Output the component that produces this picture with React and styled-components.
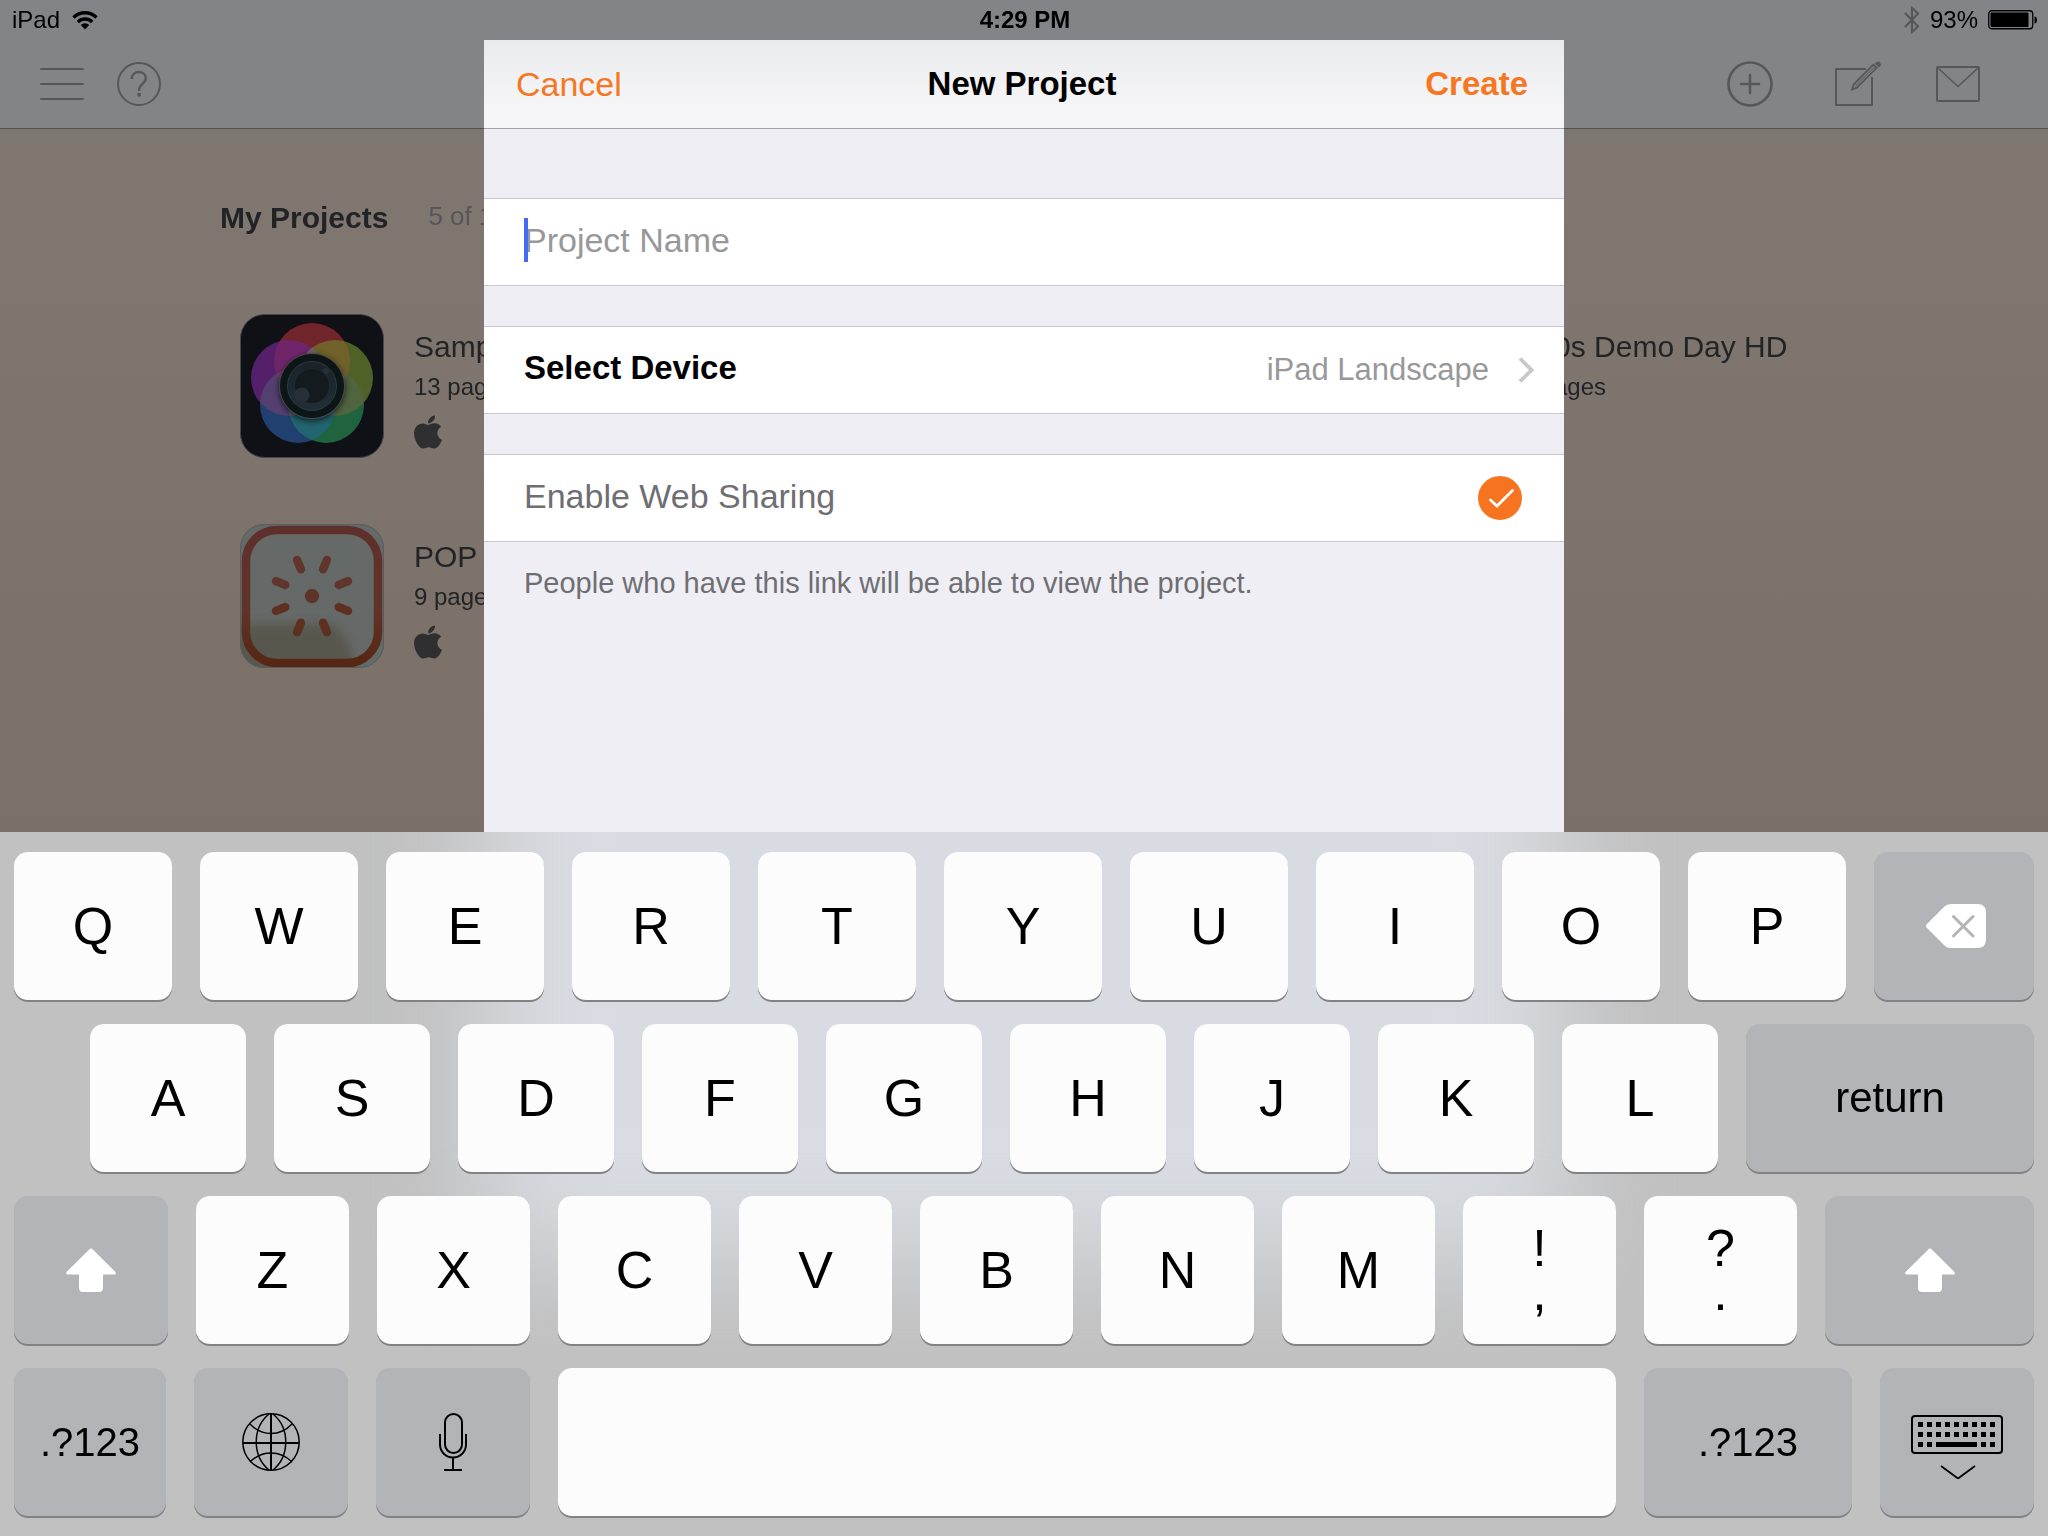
import React, { useState } from "react";
import styled, { createGlobalStyle } from "styled-components";
import { FaApple } from "react-icons/fa";

const GlobalStyle = createGlobalStyle`
  *, *::before, *::after { box-sizing: border-box; }
  body {
    margin: 0;
    font-family: "Liberation Sans", Arial, sans-serif;
    color: #000;
  }
  button, input { font: inherit; color: inherit; }
  button {
    display: flex;
    align-items: center;
    border: 0;
    padding: 0;
    margin: 0;
    background: none;
    cursor: pointer;
  }
  svg { display: block; flex: none; }
  h1, h2, h3, p, ul { margin: 0; padding: 0; }
`;

const Screen = styled.div`
  min-height: 100vh;
  display: flex;
  flex-direction: column;
`;

const Stage = styled.div`
  position: relative;
  flex: 1;
  min-height: 640px;
  overflow: hidden;
  background: linear-gradient(#7c786f 0 144px, #807770 144px, #7a7068 100%);
`;

const TopBar = styled.header`
  height: 129px;
  background: #838487;
  border-bottom: 1px solid #55504d;
`;

const StatusBar = styled.div`
  display: grid;
  grid-template-columns: 1fr auto 1fr;
  align-items: center;
  height: 40px;
  padding: 0 10px 0 12px;
  font-size: 24px;
  line-height: 40px;
`;

const StatusGroup = styled.div`
  display: flex;
  align-items: center;
  justify-content: ${(p) => (p.$end ? "flex-end" : "flex-start")};
  gap: ${(p) => (p.$end ? "10px" : "12px")};
`;

const Toolbar = styled.nav`
  display: flex;
  align-items: center;
  justify-content: space-between;
  height: 88px;
  padding: 0 68px 0 40px;
  color: #56575a;
`;

const ToolGroup = styled.div`
  display: flex;
  align-items: center;
  gap: ${(p) => p.$gap};
`;

const Projects = styled.main`
  padding: 69px 148px 0 220px;
  color: #222326;
`;

const ProjectsHeading = styled.div`
  display: flex;
  align-items: flex-start;
  gap: 40px;
  height: 116px;

  h1 { font-size: 30px; font-weight: 700; line-height: 40px; }
  span { font-size: 26px; line-height: 36px; color: #55565a; }
`;

const ProjectGrid = styled.ul`
  display: grid;
  grid-template-columns: repeat(3, 1fr);
  row-gap: 66px;
  padding-left: 20px;
  list-style: none;
`;

const Project = styled.li`
  grid-column: ${(p) => p.$column};
  display: flex;
  gap: 30px;
  height: 144px;
`;

const ProjectInfo = styled.div`
  padding-top: 13px;
  white-space: nowrap;

  h2 { font-size: 30px; font-weight: 400; line-height: 40px; }
  p { font-size: 24px; line-height: 40px; }
  svg { margin-top: 6px; margin-left: -5px; color: #2f2f32; }
`;

const Dialog = styled.form`
  position: absolute;
  top: 40px;
  bottom: 0;
  left: 50%;
  width: 1080px;
  max-width: 100%;
  transform: translateX(-50%);
  background: #efeef4;
`;

const DialogBar = styled.div`
  display: grid;
  grid-template-columns: 1fr auto 1fr;
  align-items: center;
  height: 89px;
  padding: 0 36px 0 32px;
  border-bottom: 1px solid #a3a3a7;
  background: linear-gradient(#eaebec, #f6f6f8 80%);

  h2 { font-size: 33px; font-weight: 700; }
`;

const BarButton = styled.button`
  justify-self: ${(p) => (p.$primary ? "end" : "start")};
  height: 88px;
  font-size: ${(p) => (p.$primary ? "33px" : "34px")};
  font-weight: ${(p) => (p.$primary ? 700 : 400)};
  color: #f77621;
`;

const Fields = styled.div`
  display: flex;
  flex-direction: column;
  gap: 40px;
  padding-top: 69px;
`;

const Row = styled.div`
  position: relative;
  display: flex;
  align-items: center;
  justify-content: space-between;
  width: 100%;
  height: 88px;
  padding: 0 42px 0 40px;
  border: solid #c8c7cc;
  border-width: 1px 0;
  background: #fff;
  font-size: 34px;
  color: #6e6e73;
`;

const DeviceRow = styled(Row)`
  padding-right: 30px;
  color: #000;
`;

const DeviceLabel = styled.span`
  flex: 1;
  padding-bottom: 4px;
  text-align: left;
  font-size: 33px;
  font-weight: 700;
`;

const DeviceValue = styled.span`
  margin-right: 29px;
  font-size: 31px;
  color: #98989a;
`;

const NameInput = styled.input`
  flex: 1;
  height: 84px;
  border: 0;
  padding: 0 0 4px;
  outline: none;
  background: none;
  color: #000;
  caret-color: transparent;

  &::placeholder { color: #98989a; opacity: 1; }
`;

const Caret = styled.span`
  position: absolute;
  left: 40px;
  top: 19px;
  width: 4px;
  height: 44px;
  background: #446bf2;
`;

const ShareLabel = styled.label`
  flex: 1;
  padding-bottom: 4px;
`;

const CheckWrap = styled.span`
  display: grid;
  width: 44px;
  height: 44px;

  > * { grid-area: 1 / 1; }
  svg { pointer-events: none; }
`;

const Check = styled.input`
  appearance: none;
  width: 44px;
  height: 44px;
  margin: 0;
  border: 2px solid #f77621;
  border-radius: 50%;
  cursor: pointer;

  &:checked { background: #f67320; }
`;

const Hint = styled.p`
  padding: 21px 40px 0;
  font-size: 29px;
  line-height: 40px;
  color: #6e6e73;
`;

const Board = styled.section`
  position: relative;
  display: flex;
  flex-direction: column;
  gap: 24px;
  padding: 20px 14px;
  overflow: hidden;
  background: #c1c1c1;

  /* the dialog showing through the frosted keyboard */
  &::before {
    content: "";
    position: absolute;
    top: -200px;
    left: 50%;
    width: 1080px;
    height: 628px;
    transform: translateX(-50%);
    background: #d8dbe1;
    filter: blur(54px);
  }
`;

const KeyRow = styled.div`
  position: relative;
  display: flex;
  gap: 28px;
  padding-left: ${(p) => (p.$indent ? "76px" : "0")};
`;

const Key = styled.button`
  flex: ${(p) => p.$size} 1 0;
  flex-direction: column;
  justify-content: center;
  min-width: 0;
  height: 148px;
  border-radius: 14px;
  background: ${(p) => (p.$dark ? "#b3b4b7" : "#fcfcfc")};
  box-shadow: 0 2px 0 #828285;
  font-size: ${(p) => p.$font || "52px"};
  line-height: 44px;
`;

const stroke = (width) => ({
  fill: "none",
  stroke: "currentColor",
  strokeWidth: width,
});

const WifiIcon = () => (
  <svg width="26" height="20" viewBox="0 0 26 20" {...stroke(3.4)}>
    <path d="M1.5 7.5a16.3 16.3 0 0 1 23 0" />
    <path d="M5.8 12a10.2 10.2 0 0 1 14.4 0" />
    <path d="M13 19.5 8.8 15a6 6 0 0 1 8.4 0Z" fill="currentColor" stroke="none" />
  </svg>
);

const BluetoothIcon = () => (
  <svg width="16" height="28" viewBox="0 0 16 28" color="#56575a" {...stroke(2.2)}>
    <path d="M1 7 14 20.5 8 26V2L14 7.5 1 21" />
  </svg>
);

const BatteryIcon = () => (
  <svg width="50" height="20" viewBox="0 0 50 20">
    <rect x=".75" y=".75" width="44" height="18" rx="3" {...stroke(1.3)} />
    <rect x="2.5" y="2.5" width="38" height="14.5" rx="1" />
    <path d="M46.5 6.500c3.4 0 3.4 7 0 7Z" />
  </svg>
);

const MenuIcon = () => (
  <svg width="44" height="44" viewBox="0 0 44 44" {...stroke(2)} strokeLinecap="round">
    <path d="M1 7h42M1 22h42M1 37h42" />
  </svg>
);

const HelpIcon = () => (
  <svg width="44" height="44" viewBox="0 0 44 44" {...stroke(2)}>
    <circle cx="22" cy="22" r="21" />
    <path d="M14.8 17c0-4.6 3-7 7-7s7 2.5 7 6.3c0 5.2-6.7 6-6.7 11.7v1" strokeWidth="2.4" />
    <path d="M20.4 31h3.4v3.5h-3.4z" fill="currentColor" stroke="none" />
  </svg>
);

const PlusIcon = () => (
  <svg width="46" height="46" viewBox="0 0 46 46" {...stroke(2.6)} strokeLinecap="round">
    <circle cx="23" cy="23" r="21.5" />
    <path d="M23 14v18M14 23h18" />
  </svg>
);

const ComposeIcon = () => (
  <svg width="53" height="46" viewBox="-7 1 53 46" {...stroke(2)}>
    <path d="M31 9H1v36h36V17" />
    <path d="m17 29.5 1.6-5L38.5 4.6l3.2 3.2-19.9 19.9Z" strokeWidth="1.8" />
    <path d="M20.5 26 40 6.4" strokeWidth="1" />
    <path d="M41 2.500c1.6-1.6 3-1 4 .2s1.200 2.600 0 3.800l-1 1-4-4Z" fill="currentColor" stroke="none" />
  </svg>
);

const MailIcon = () => (
  <svg width="44" height="36" viewBox="0 0 44 36" {...stroke(2)} strokeLinejoin="round">
    <rect x="1" y="1" width="42" height="34" rx="1" />
    <path d="m2 2 20 18.5L42 2" strokeWidth="1.6" />
  </svg>
);

const ChevronIcon = () => (
  <svg width="16" height="26" viewBox="0 0 16 26" color="#c7c7cc" {...stroke(3.8)}>
    <path d="m2 1.5 11.500 11.500L2 24.500" />
  </svg>
);

const CheckIcon = () => (
  <svg width="44" height="44" viewBox="0 0 44 44" color="#fff" {...stroke(2.8)} strokeLinecap="round">
    <path d="m12.5 24 6.5 6 15.500-15.500" />
  </svg>
);

const CameraIcon = () => (
  <svg width="144" height="144" viewBox="0 0 144 144">
    <defs>
      <filter id="lensShadow" x="-30%" y="-30%" width="160%" height="160%">
        <feDropShadow dx="0" dy="2" stdDeviation="3" floodColor="#000" floodOpacity=".7" />
      </filter>
      <linearGradient id="glass" x1="0" y1="0" x2="0" y2="1">
        <stop offset="0" stopColor="#1a2429" />
        <stop offset="1" stopColor="#202e36" />
      </linearGradient>
    </defs>
    <rect x=".5" y=".5" width="143" height="143" rx="24" fill="#0f1116" stroke="#44474c" />
    <g style={{ isolation: "isolate" }}>
      {[
        [72, 47, "#70252a"],
        [95, 64, "#506127"],
        [86, 91, "#1f643f"],
        [58, 91, "#22406f"],
        [49, 64, "#54206a"],
      ].map(([cx, cy, fill]) => (
        <circle key={fill} cx={cx} cy={cy} r="38" fill={fill} style={{ mixBlendMode: "lighten" }} />
      ))}
    </g>
    <circle cx="72" cy="72" r="32.5" fill="#111217" stroke="#4c5056" strokeWidth=".8" filter="url(#lensShadow)" />
    <circle cx="72" cy="72" r="24.5" fill="url(#glass)" stroke="#2b3a42" />
    <circle cx="72" cy="72" r="17" fill="#131b1e" />
    <circle cx="62" cy="81" r="7.5" fill="#253137" />
    <circle cx="86" cy="57" r="3" fill="#24323a" />
  </svg>
);

const PopIcon = () => (
  <svg width="144" height="144" viewBox="0 0 144 144">
    <defs>
      <linearGradient id="popFrame" x1="0" y1="0" x2="0" y2="1">
        <stop offset="0" stopColor="#5f302b" />
        <stop offset=".6" stopColor="#603327" />
        <stop offset="1" stopColor="#572713" />
      </linearGradient>
      <clipPath id="popClip">
        <rect width="144" height="144" rx="24" />
      </clipPath>
      <filter id="popSoft" x="-20%" y="-20%" width="140%" height="140%">
        <feGaussianBlur stdDeviation="4" />
      </filter>
    </defs>
    <g clipPath="url(#popClip)">
      <rect width="144" height="144" fill="#656967" />
      <path d="M-8 100h98q20 8 26 50H-8Z" fill="#55524a" opacity=".8" filter="url(#popSoft)" />
      <rect x="6" y="6" width="132" height="133" rx="31" fill="none" stroke="url(#popFrame)" strokeWidth="8.5" />
      <circle cx="72" cy="72" r="7.2" fill="#5e3429" />
      {[0, 1, 2, 3, 4, 5, 6, 7].map((n) => (
        <path
          key={n}
          d="M72 43v-10"
          transform={`rotate(${22.5 + n * 45} 72 72)`}
          stroke={n > 1 && n < 6 ? "#5d301f" : "#60352c"}
          strokeWidth="8.5"
          strokeLinecap="round"
        />
      ))}
    </g>
    <rect x=".5" y=".5" width="143" height="143" rx="24" fill="none" stroke="#585d5e" />
  </svg>
);

const BackspaceIcon = () => (
  <svg width="64" height="44" viewBox="-4 0 64 44">
    <path
      d="M1 20 18.5 2.5Q21 0 25 0H51.5Q60 0 60 8.5V35.5Q60 44 51.5 44H25Q21 44 18.5 41.5L1 24Q-1 22 1 20Z"
      fill="#fff"
    />
    <path d="m27.500 12.500 19.500 19.500M47 12.500 27.500 32" stroke="#b3b4b7" strokeWidth="3" strokeLinecap="round" />
  </svg>
);

const ShiftIcon = () => (
  <svg width="50" height="44" viewBox="0 0 50 44">
    <path
      d="M24 .8Q25 0 26 .8L49.5 24Q50.5 26.5 48.5 26.5H37V40Q37 44 33 44H17Q13 44 13 40V26.5H1.5Q-.5 26.5.5 24Z"
      fill="#fff"
    />
  </svg>
);

const GlobeIcon = () => (
  <svg width="58" height="58" viewBox="0 0 58 58" {...stroke(1.5)}>
    <circle cx="29" cy="29" r="28.2" />
    <path d="M29 1v56M1 30h56" strokeWidth="2" />
    <path d="M27 1C10 15 10 43 27 57M31 1c17 14 17 42 0 56" />
    <path d="M8 11q9 9.5 21 9.500T50 11M8 49q9-9 21-9t21 9" />
  </svg>
);

const MicIcon = () => (
  <svg width="28" height="58" viewBox="0 0 28 58" {...stroke(2)}>
    <rect x="6" y="1" width="17" height="39" rx="8.5" />
    <path d="M1 21v10.500a13 13 0 0 0 26 0V21M14 45v12M5 57h18" />
  </svg>
);

const dots = (xs, y) => xs.map((x) => `M${x} ${y}h5v5h-5z`).join("");
const columns = [0, 1, 2, 3, 4, 5, 6, 7, 8].map((n) => 7 + n * 9);

const HideKeyboardIcon = () => (
  <svg width="92" height="74" viewBox="0 0 92 74">
    <rect x="1" y="11" width="90" height="37" rx="3" {...stroke(2)} />
    <path
      d={dots(columns, 17) + dots(columns, 27) + dots([7, 16, 70, 79], 37) + "M25 37h41v5H25z"}
    />
    <path d="m30 61 17 12.500L64 61" {...stroke(1.8)} />
  </svg>
);

const TOP_KEYS = [..."QWERTYUIOP"];
const HOME_KEYS = [..."ASDFGHJKL"];
const BOTTOM_KEYS = [..."ZXCVBNM"];
const PUNCTUATION = [["!", ","], ["?", "."]];

const PROJECTS = [
  { name: "Sample", pages: "13 pages", column: 1, Icon: CameraIcon, apple: true },
  { name: "500s Demo Day HD", pages: "9 pages", column: 3, Icon: CameraIcon },
  { name: "POP", pages: "9 pages", column: 1, Icon: PopIcon, apple: true },
];

function Keyboard({ onType, onDelete }) {
  const letters = (keys, size) =>
    keys.map((k) => (
      <Key key={k} type="button" $size={size} onClick={() => onType(k)}>
        {k}
      </Key>
    ));

  return (
    <Board aria-label="Keyboard">
      <KeyRow>
        {letters(TOP_KEYS, 158)}
        <Key type="button" $dark $size={160} aria-label="Delete" onClick={onDelete}>
          <BackspaceIcon />
        </Key>
      </KeyRow>
      <KeyRow $indent>
        {letters(HOME_KEYS, 156)}
        <Key type="button" $dark $size={288} $font="42px">return</Key>
      </KeyRow>
      <KeyRow>
        <Key type="button" $dark $size={154} aria-label="Shift"><ShiftIcon /></Key>
        {letters(BOTTOM_KEYS, 153)}
        {PUNCTUATION.map(([upper, lower]) => (
          <Key key={lower} type="button" $size={153} onClick={() => onType(lower)}>
            <span>{upper}</span>
            <span>{lower}</span>
          </Key>
        ))}
        <Key type="button" $dark $size={209} aria-label="Shift"><ShiftIcon /></Key>
      </KeyRow>
      <KeyRow>
        <Key type="button" $dark $size={152} $font="40px">.?123</Key>
        <Key type="button" $dark $size={154} aria-label="Next keyboard"><GlobeIcon /></Key>
        <Key type="button" $dark $size={154} aria-label="Dictate"><MicIcon /></Key>
        <Key type="button" $size={1058} aria-label="Space" onClick={() => onType(" ")} />
        <Key type="button" $dark $size={208} $font="40px">.?123</Key>
        <Key type="button" $dark $size={154} aria-label="Hide keyboard"><HideKeyboardIcon /></Key>
      </KeyRow>
    </Board>
  );
}

export default function App() {
  const [name, setName] = useState("");
  const [sharing, setSharing] = useState(true);

  return (
    <Screen>
      <GlobalStyle />
      <Stage>
        <TopBar>
          <StatusBar>
            <StatusGroup>
              <span>iPad</span>
              <WifiIcon />
            </StatusGroup>
            <strong>4:29 PM</strong>
            <StatusGroup $end>
              <BluetoothIcon />
              <span>93%</span>
              <BatteryIcon />
            </StatusGroup>
          </StatusBar>
          <Toolbar>
            <ToolGroup $gap="33px">
              <button type="button" aria-label="Menu"><MenuIcon /></button>
              <button type="button" aria-label="Help"><HelpIcon /></button>
            </ToolGroup>
            <ToolGroup $gap="55px">
              <button type="button" aria-label="Add project"><PlusIcon /></button>
              <button type="button" aria-label="Compose"><ComposeIcon /></button>
              <button type="button" aria-label="Mail"><MailIcon /></button>
            </ToolGroup>
          </Toolbar>
        </TopBar>

        <Projects>
          <ProjectsHeading>
            <h1>My Projects</h1>
            <span>5 of 10</span>
          </ProjectsHeading>
          <ProjectGrid>
            {PROJECTS.map(({ name: title, pages, column, Icon, apple }) => (
              <Project key={title} $column={column}>
                <Icon />
                <ProjectInfo>
                  <h2>{title}</h2>
                  <p>{pages}</p>
                  {apple && <FaApple size={38} />}
                </ProjectInfo>
              </Project>
            ))}
          </ProjectGrid>
        </Projects>

        <Dialog role="dialog" aria-label="New Project" onSubmit={(e) => e.preventDefault()}>
          <DialogBar>
            <BarButton type="button">Cancel</BarButton>
            <h2>New Project</h2>
            <BarButton type="submit" $primary>Create</BarButton>
          </DialogBar>
          <Fields>
            <Row>
              <NameInput
                type="text"
                aria-label="Project Name"
                placeholder="Project Name"
                value={name}
                onChange={(e) => setName(e.target.value)}
              />
              {name === "" && <Caret />}
            </Row>
            <DeviceRow as="button" type="button">
              <DeviceLabel>Select Device</DeviceLabel>
              <DeviceValue>iPad Landscape</DeviceValue>
              <ChevronIcon />
            </DeviceRow>
            <Row>
              <ShareLabel htmlFor="sharing">Enable Web Sharing</ShareLabel>
              <CheckWrap>
                <Check
                  id="sharing"
                  type="checkbox"
                  checked={sharing}
                  onChange={(e) => setSharing(e.target.checked)}
                />
                {sharing && <CheckIcon />}
              </CheckWrap>
            </Row>
          </Fields>
          <Hint>People who have this link will be able to view the project.</Hint>
        </Dialog>
      </Stage>
      <Keyboard
        onType={(k) => setName((n) => n + k)}
        onDelete={() => setName((n) => n.slice(0, -1))}
      />
    </Screen>
  );
}
